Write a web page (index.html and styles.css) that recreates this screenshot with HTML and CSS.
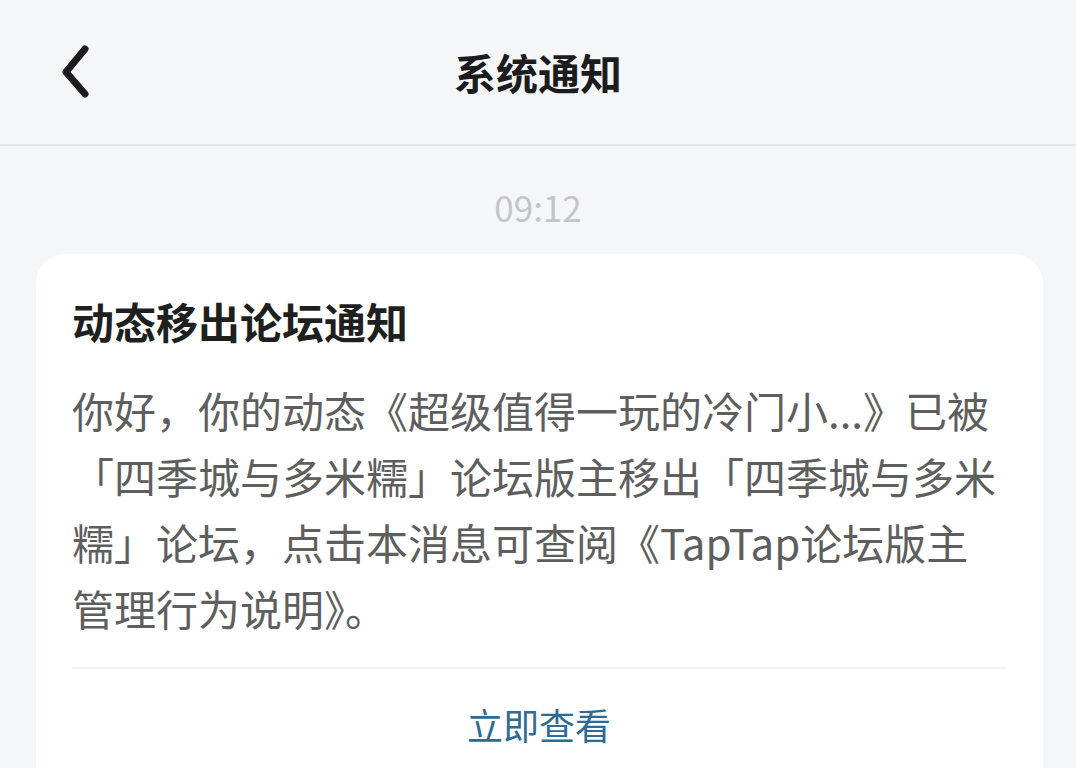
FILE: index.html
```html
<!DOCTYPE html>
<html lang="zh-CN">
<head>
  <meta charset="UTF-8" />
  <title>系统通知</title>
  <link rel="stylesheet" href="styles.css">
</head>
<body>
  <div class="navbar">
    <div class="nav-left">
      <svg class="back" width="40" height="56" viewBox="0 0 40 56">
        <path d="M28 5 L9 28 L28 50" fill="none" stroke="#1c1c1e" stroke-width="7" stroke-linecap="round" stroke-linejoin="round"/>
      </svg>
    </div>
    <div class="nav-title">系统通知</div>
    <div class="nav-right"></div>
  </div>

  <div class="time">09:12</div>

  <div class="card">
    <div class="card-title">动态移出论坛通知</div>
    <div class="card-body">你好，你的动态《超级值得一玩的冷门小...》已被<br>「四季城与多米糯」论坛版主移出「四季城与多米<br>糯」论坛，点击本消息可查阅《TapTap论坛版主<br>管理行为说明》。</div>
    <div class="card-action">立即查看</div>
  </div>
</body>
</html>
```

FILE: styles.css
```css
body {
  margin: 0;
  background: #f5f6f8;
  font-family: "Noto Sans CJK SC", "Noto Sans", sans-serif;
  color: #222;
}
.navbar {
  height: 144px;
  border-bottom: 2px solid #e5e6e9;
  display: grid;
  grid-template-columns: 1fr auto 1fr;
  align-items: center;
}
.nav-left {
  padding-left: 57px;
  display: flex;
  align-items: center;
}
.nav-title {
  font-size: 42px;
  font-weight: bold;
  color: #1c1c1e;
  line-height: 56px;
}
.time {
  padding-top: 39px;
  text-align: center;
  font-size: 35px;
  line-height: 44px;
  color: #c2c6cb;
}
.card {
  margin: 25px 33px 0 36px;
  background: #fff;
  border-radius: 30px 30px 0 0;
  padding: 39px 37px 20px 36px;
}
.card-title {
  font-size: 42px;
  font-weight: bold;
  line-height: 56px;
  color: #1f1f1f;
  margin-bottom: 28px;
}
.card-body {
  font-size: 42px;
  line-height: 66px;
  color: #5e5e5e;
  padding-bottom: 26px;
  border-bottom: 2px solid #f0f1f2;
}
.card-action {
  padding-top: 30px;
  text-align: center;
  font-size: 36px;
  line-height: 50px;
  color: #2e6a92;
}
```
